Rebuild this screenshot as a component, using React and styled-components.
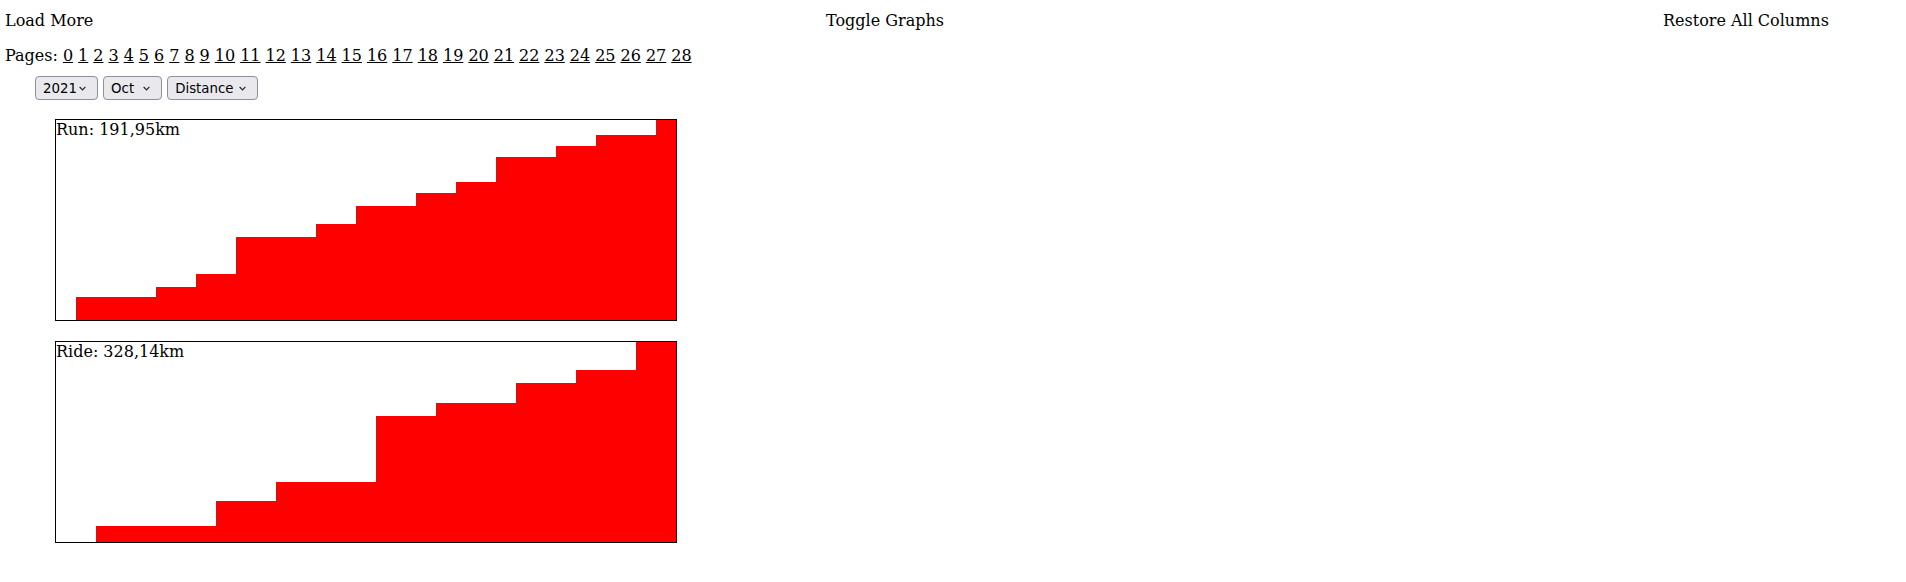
import styled, { createGlobalStyle } from "styled-components"

// Styles globaux de la page
const GlobalStyle = createGlobalStyle`
  body {
    margin: 0;
    background: #fff;
    color: #000;
    font-family: "DejaVu Serif", "Liberation Serif", serif;
    font-size: 16px;
    line-height: 19px;
  }
`

// Barre du haut avec les trois actions
const TopBar = styled.div`
  display: grid;
  grid-template-columns: 821px 837px auto;
  padding: 11px 0 0 5px;
`

const TextButton = styled.button`
  justify-self: start;
  background: none;
  border: none;
  padding: 0;
  margin: 0;
  font: inherit;
  line-height: 19px;
  color: #000;
  cursor: pointer;
`

// Liste des pages
const Pages = styled.div`
  margin-top: 16px;
  padding-left: 5px;
  word-spacing: -0.1px;
`

const PageLink = styled.a`
  color: #000;
  text-decoration: underline;
`

// Filtres année / mois / type
const Filters = styled.div`
  margin-top: 11px;
  padding-left: 35px;
  height: 24px;
`

const SelectWrap = styled.span`
  position: relative;
  display: inline-block;
  vertical-align: top;
`

const Select = styled.select`
  appearance: none;
  display: block;
  width: ${(p) => p.$width}px;
  height: 24px;
  margin: 0;
  padding: 0 0 0 7px;
  font-family: "DejaVu Sans", sans-serif;
  font-size: 13.333px;
  color: #000;
  background-color: #e9e9ed;
  border: 1px solid #8f8f9d;
  border-radius: 4px;
`

const Chevron = styled.svg`
  position: absolute;
  right: 12px;
  top: 10px;
  pointer-events: none;
`

// Graphiques cumulés
const Charts = styled.div`
  padding-left: 55px;
`

const ChartBox = styled.div`
  position: relative;
  width: 620px;
  height: 200px;
  margin-top: 19px;
  border: 1px solid #000;

  & + & {
    margin-top: 20px;
  }
`

const ChartLabel = styled.span`
  position: absolute;
  top: 0;
  left: 0;
`

const ChartSvg = styled.svg`
  display: block;
`

const DAY_WIDTH = 20
const CHART_HEIGHT = 200
const DAYS = 31

const runs = [
  { day: 1, km: 22.1 },
  { day: 5, km: 9.6 },
  { day: 7, km: 12.5 },
  { day: 9, km: 35.5 },
  { day: 13, km: 12.4 },
  { day: 15, km: 17.3 },
  { day: 18, km: 12.5 },
  { day: 20, km: 10.5 },
  { day: 22, km: 24.0 },
  { day: 25, km: 10.6 },
  { day: 27, km: 10.6 },
  { day: 30, km: 14.35 },
]

const rides = [
  { day: 2, km: 26.3 },
  { day: 8, km: 41.0 },
  { day: 11, km: 31.2 },
  { day: 16, km: 108.3 },
  { day: 19, km: 21.3 },
  { day: 23, km: 32.8 },
  { day: 26, km: 21.3 },
  { day: 29, km: 45.94 },
]

const months = ["Jan", "Feb", "Mar", "Apr", "May", "Jun", "Jul", "Aug", "Sep", "Oct", "Nov", "Dec"]

// Construit le tracé en escalier de la distance cumulée
function stepPath(activities, total) {
  let sum = 0
  let y = CHART_HEIGHT
  let d = `M${activities[0].day * DAY_WIDTH},${CHART_HEIGHT}`
  activities.forEach((a) => {
    sum += a.km
    const x = a.day * DAY_WIDTH
    d += ` L${x},${y}`
    y = CHART_HEIGHT - Math.round((sum / total) * CHART_HEIGHT)
    d += ` L${x},${y}`
  })
  d += ` L${DAYS * DAY_WIDTH},${y} L${DAYS * DAY_WIDTH},${CHART_HEIGHT} Z`
  return d
}

function Chart({ label, activities }) {
  const total = activities.reduce((s, a) => s + a.km, 0)
  return (
    <ChartBox>
      <ChartSvg width={DAYS * DAY_WIDTH} height={CHART_HEIGHT} shapeRendering="crispEdges">
        <path d={stepPath(activities, total)} fill="#ff0000" />
      </ChartSvg>
      <ChartLabel>
        {label}: {total.toFixed(2).replace(".", ",")}km
      </ChartLabel>
    </ChartBox>
  )
}

// Menu déroulant avec sa petite flèche
function Dropdown({ width, value, options }) {
  return (
    <SelectWrap>
      <Select $width={width} defaultValue={value}>
        {options.map((o) => (
          <option key={o}>{o}</option>
        ))}
      </Select>
      <Chevron width="7" height="5" viewBox="0 0 7 5">
        <path d="M0.6 0.8 L3.5 3.8 L6.4 0.8" fill="none" stroke="#222" strokeWidth="1.2" />
      </Chevron>
    </SelectWrap>
  )
}

const pageNumbers = Array.from({ length: 29 }, (_, i) => i)

function App() {
  return (
    <>
      <GlobalStyle />
      <TopBar>
        <TextButton>Load More</TextButton>
        <TextButton>Toggle Graphs</TextButton>
        <TextButton>Restore All Columns</TextButton>
      </TopBar>
      <Pages>
        Pages:{" "}
        {pageNumbers.map((n) => (
          <span key={n}>
            <PageLink href="#">{n}</PageLink>{" "}
          </span>
        ))}
      </Pages>
      <Filters>
        <Dropdown width={63} value="2021" options={["2019", "2020", "2021"]} />{" "}
        <Dropdown width={59} value="Oct" options={months} />{" "}
        <Dropdown width={91} value="Distance" options={["Distance", "Time"]} />
      </Filters>
      <Charts>
        <Chart label="Run" activities={runs} />
        <Chart label="Ride" activities={rides} />
      </Charts>
    </>
  )
}

export default App
